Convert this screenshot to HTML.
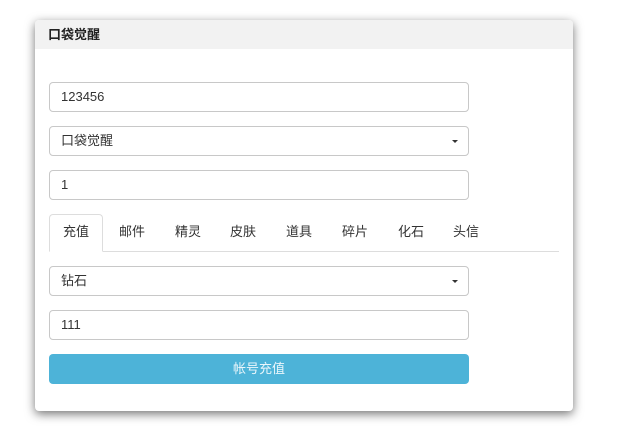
<!DOCTYPE html>
<html><head><meta charset="utf-8"><style>
body{margin:0;width:621px;height:444px;background:#fff;font-family:"Liberation Sans","Noto Sans CJK SC",sans-serif;font-size:13px;color:#333;position:relative;overflow:hidden}
.panel{position:absolute;left:35px;top:20px;width:538px;height:391px;background:#fff;border-radius:4px;box-shadow:0 3px 10px rgba(0,0,0,.55);overflow:hidden}
.hd{height:29px;background:#f2f2f2;font-weight:bold;font-size:13px;line-height:29px;padding-left:13px;color:#222}
.f{position:absolute;left:14px;height:28px;border:1px solid #c8c8c8;border-radius:4px;line-height:28px;padding-left:11px;box-sizing:content-box;width:407px}
.car{position:absolute;right:10px;top:13px;border-left:3px solid transparent;border-right:3px solid transparent;border-top:3px solid #333}
.tabs{position:absolute;left:14px;top:194px;width:510px;height:37px;border-bottom:1px solid #ddd}
.tab{position:absolute;top:0;height:37px;line-height:35px;text-align:center;width:54px}
.tab.a{border:1px solid #ddd;border-bottom:1px solid #fff;border-radius:4px 4px 0 0;height:38px;box-sizing:border-box;left:0;line-height:33px}
.btn{position:absolute;left:14px;top:334px;width:420px;height:30px;background:#4db3d8;border-radius:4px;color:#eaf6fb;text-align:center;line-height:30px}
</style></head><body>
<div class="panel">
<div class="hd">口袋觉醒</div>
<div class="f" style="top:62px">123456</div>
<div class="f" style="top:106px">口袋觉醒<span class="car"></span></div>
<div class="f" style="top:150px">1</div>
<div class="tabs">
<div class="tab a">充值</div>
<div class="tab" style="left:56px">邮件</div>
<div class="tab" style="left:112px">精灵</div>
<div class="tab" style="left:167px">皮肤</div>
<div class="tab" style="left:223px">道具</div>
<div class="tab" style="left:279px">碎片</div>
<div class="tab" style="left:335px">化石</div>
<div class="tab" style="left:390px">头信</div>
</div>
<div class="f" style="top:246px">钻石<span class="car"></span></div>
<div class="f" style="top:290px">111</div>
<div class="btn">帐号充值</div>
</div>
</body></html>
